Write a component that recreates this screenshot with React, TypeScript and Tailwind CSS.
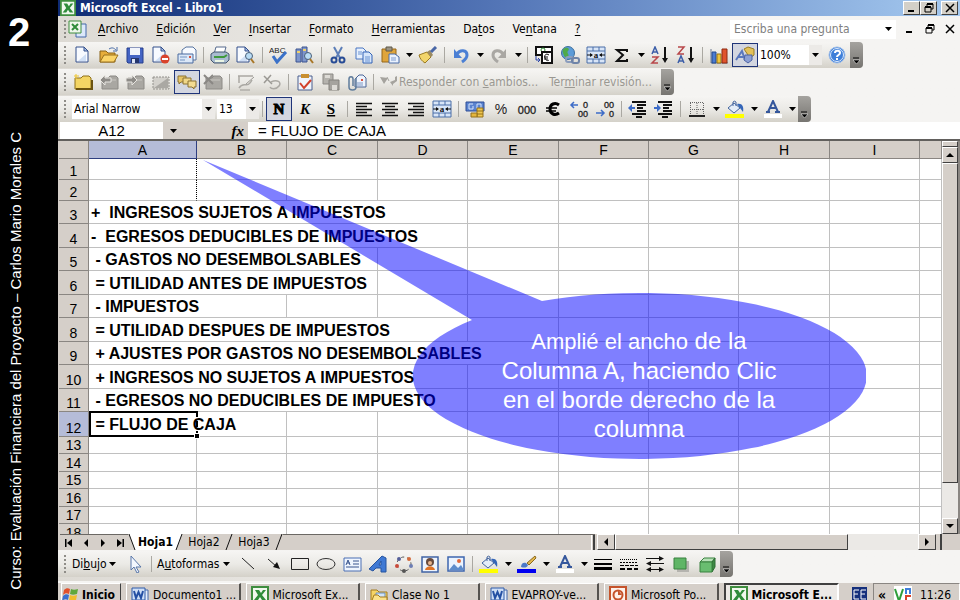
import type { ReactNode } from "react";

const Svg = ({ children, w = 20 }: { children: ReactNode; w?: number }) => (
  <svg width={w} height="18" viewBox={`0 0 ${w} 18`} fill="none" className="shrink-0" aria-hidden="true">
    {children}
  </svg>
);

const Caret = () => (
  <svg width="7" height="4" viewBox="0 0 7 4" aria-hidden="true" className="shrink-0">
    <path d="M0 0H7L3.5 4Z" fill="#000" />
  </svg>
);

const Sheet = ({ x = 3, y = 1 }: { x?: number; y?: number }) => (
  <>
    <path d={`M${x} ${y}h8l4 4v11h-12z`} fill="#f7faff" stroke="#34508c" />
    <path d={`M${x + 8} ${y}v4h4z`} fill="#a9c0e6" stroke="#34508c" />
    <path d={`M${x + 2} ${y + 14}h8V${y + 7}z`} fill="#cfdff5" />
  </>
);

const Lens = () => (
  <>
    <circle cx="13" cy="10" r="3.5" fill="#b9dcf5" stroke="#4a5f78" />
    <path d="M15 13l3 4" stroke="#a87728" strokeWidth="2" />
  </>
);

const Bucket = ({ color }: { color: string }) => (
  <>
    <path d="M3 8l6-5 6 5-6 5z" fill="#e4edf8" stroke="#44659e" />
    <path d="M8 6V2a2 2 0 0 1 3 0v4" stroke="#44659e" />
    <path d="M12 4c5-1 7 2 6 8l-3-4z" fill="#3566b8" />
    <path d="M0 14h19v4H0z" fill={color} />
  </>
);

const MergeCells = () => (
  <>
    <path d="M1 1h18v16H1z" fill="#d8e5f7" stroke="#4b6ea8" />
    <path d="M1 5h18M1 13h18M7 1v4M13 1v4M7 13v4M13 13v4" stroke="#4b6ea8" />
    <path d="M1 9h5M14 9h5" stroke="#111" />
    <path d="M7 9L4 7v4zM13 9l3-2v4z" fill="#111" />
    <text x="10" y="12" textAnchor="middle" fontSize="9" fontWeight="700" fill="#111" fontFamily="Liberation Serif, serif">
      a
    </text>
  </>
);

const Indent = ({ flip = false }: { flip?: boolean }) => (
  <>
    <path d="M4 2h14M9 5h9M9 8h6M9 11h9M4 14h14M8 17h6" stroke="#111" strokeWidth="2" />
    <path d={flip ? "M7 8L3 4v3H0v2h3v3z" : "M0 8l4-4v3h3v2H4v3z"} fill="#3d6cc8" />
  </>
);

const Zeros = ({ x, y, children }: { x: number; y: number; children: string }) => (
  <text x={x} y={y} textAnchor="end" fontSize="9" fill="#222" stroke="#222" strokeWidth=".3" fontFamily="Liberation Sans, sans-serif">
    {children}
  </text>
);

const GrayFolder = ({ children }: { children?: ReactNode }) => (
  <>
    <path d="M3 5h6l2-2h6l2 2v11H3z" fill="#a9a7a2" stroke="#8c8a86" />
    <path d="M4 7h13" stroke="#c9c7c2" />
    {children}
  </>
);

const ExcelLogo = () => (
  <>
    <path d="M1 1h16v16H1z" fill="#f1f8ee" stroke="#3f8d3f" strokeWidth="2" />
    <path d="M4 4h4l2 3 2-3h3l-4 5 4 5h-4l-2-3-2 3H3l4-5z" fill="#2f8c3a" />
  </>
);

const WordLogo = () => (
  <>
    <path d="M8 4h9v13H6z" fill="#e3ecfa" stroke="#4468aa" />
    <path d="M1 2h13v12H1z" fill="#cfdff6" stroke="#2f5ba8" />
    <path d="M3 5l2 7 2.500-6 2.500 6 2-7" stroke="#2450a4" strokeWidth="2" />
  </>
);

const icons: Record<string, ReactNode> = {
  new: <Sheet />,
  open: (
    <>
      <path d="M1 5h6l2 2h7v9H1z" fill="#e7ad3a" stroke="#8a6216" />
      <path d="M1 16l4-7h14l-4 7z" fill="#fbd468" stroke="#9a701c" />
      <path d="M10 3c3-2 5-1 7 1M18 1v4h-4" stroke="#4a6da8" />
    </>
  ),
  save: (
    <>
      <path d="M2 2h16v15H3l-1-1z" fill="#4464c4" stroke="#263f8c" />
      <path d="M5 2h10v7H5z" fill="#f1f4fb" />
      <path d="M6 12h8v5H6z" fill="#26376e" />
      <path d="M7 13h3v4H7z" fill="#dde4f5" />
    </>
  ),
  permission: (
    <>
      <Sheet x={2} />
      <circle cx="14" cy="13" r="4.500" fill="#d9432b" />
      <path d="M11 13h6" stroke="#fff" strokeWidth="2" />
    </>
  ),
  mail: (
    <>
      <path d="M5 8V4l4-3h7l3 3v10h-3" fill="#f7faff" stroke="#56739f" />
      <path d="M1 8h15v9H1z" fill="#dbe8f8" stroke="#4a6b9f" />
      <path d="M3 11h7M3 14h5" stroke="#7593c0" />
      <path d="M12 10h2v2h-2z" fill="#d65343" />
    </>
  ),
  print: (
    <>
      <path d="M6 1h10l-2 7H4z" fill="#fff" stroke="#566b8e" />
      <path d="M1 8l3-2h12l3 2v6l-3 3H4l-3-3z" fill="#a9bcd0" stroke="#43566e" />
      <path d="M4 11h10l3-2" stroke="#3f9a3c" strokeWidth="2" />
      <path d="M5 14h9v2H5z" fill="#eaf5e4" />
    </>
  ),
  preview: (
    <>
      <Sheet x={1} />
      <Lens />
    </>
  ),
  spell: (
    <>
      <text x="0" y="7" fontSize="8" fill="#222" fontFamily="Liberation Sans, sans-serif">
        ABC
      </text>
      <path d="M4 10l4 6 9-10" stroke="#3b72c9" strokeWidth="3" />
    </>
  ),
  research: (
    <>
      <path d="M1 3h5v13H1zM7 1h5v15H7z" fill="#7e96cb" stroke="#3d5590" />
      <path d="M2 6h3M8 4h3" stroke="#f1d26b" strokeWidth="2" />
      <Lens />
    </>
  ),
  cut: (
    <>
      <path d="M6 1l6 11M14 1L8 12" stroke="#5c7eb8" strokeWidth="2" />
      <circle cx="6" cy="14" r="2.500" stroke="#274b95" strokeWidth="2" />
      <circle cx="14" cy="14" r="2.500" stroke="#274b95" strokeWidth="2" />
    </>
  ),
  copy: (
    <>
      <path d="M2 2h7l3 3v8H2z" fill="#e7f0fd" stroke="#4a76c2" />
      <path d="M9 6h6l3 3v8H9z" fill="#d6e6fb" stroke="#3262b5" />
      <path d="M4 6h4M4 8h4M11 11h5M11 13h5M11 15h5" stroke="#6b93d2" />
    </>
  ),
  paste: (
    <>
      <path d="M2 3h14v13H2z" fill="#dfa53c" stroke="#94661a" />
      <path d="M6 1h6v4H6z" fill="#9b9484" stroke="#5e5948" />
      <path d="M9 8h6l4 3v6H9z" fill="#eaf2fd" stroke="#4a6da8" />
      <path d="M11 12h5M11 14h5" stroke="#7c9bd0" />
    </>
  ),
  brush: (
    <>
      <path d="M1 9l8-3 4 5-6 6c-3-2-5-4-6-8z" fill="#f2d56b" stroke="#9a7a22" />
      <path d="M9 6l4 5 2-2-3-5z" fill="#9b8a62" />
      <path d="M13 6l5-5" stroke="#4967a6" strokeWidth="3" />
    </>
  ),
  undo: (
    <>
      <path d="M6 8c3-5 10-4 10 1 0 3-2 5-5 7" stroke="#4c80d4" strokeWidth="3" />
      <path d="M3 3v9h8z" fill="#4c80d4" />
    </>
  ),
  redo: (
    <>
      <path d="M14 8C11 3 4 4 4 9c0 3 2 5 5 7" stroke="#a9a7a3" strokeWidth="3" />
      <path d="M17 3v9H9z" fill="#a9a7a3" />
    </>
  ),
  euroConvert: (
    <>
      <path d="M2 1h16v8H2z" fill="#fff" stroke="#111" strokeWidth="2" />
      <circle cx="9" cy="4" r="2" stroke="#2a8a2f" />
      <path d="M8 6h10v11H8z" fill="#fff" stroke="#111" strokeWidth="2" />
      <path d="M15 9c-3-2-5 0-4 3s3 3 4 2M10 11h4M10 13h4" stroke="#111" />
      <path d="M2 10v4h3M4 12l2 2-2 2" stroke="#2640a8" />
    </>
  ),
  link: (
    <>
      <circle cx="8" cy="7" r="6.500" fill="#5b9bd8" stroke="#3e6f9e" />
      <path d="M5 2c3-1 5 1 3 3s2 3 0 6-4-1-5-4 0-4 2-5z" fill="#4faa4a" />
      <rect x="6" y="11" width="7" height="5" rx="2" stroke="#8b9dbd" strokeWidth="2" />
      <rect x="12" y="12" width="7" height="5" rx="2" stroke="#6f84a8" strokeWidth="2" />
    </>
  ),
  merge: <MergeCells />,
  sum: <path d="M15 6V4H5l6 5-6 6h10v-2" stroke="#111" strokeWidth="2" />,
  sortAsc: (
    <>
      <path d="M2 8l3-7 3 7M3 6h4" stroke="#3c5ea8" strokeWidth="1.500" />
      <path d="M2 11h6l-6 6h6" stroke="#b8474a" strokeWidth="1.500" />
      <path d="M15 1v13" stroke="#111" strokeWidth="2" />
      <path d="M12 12h6l-3 5z" fill="#111" />
    </>
  ),
  sortDesc: (
    <>
      <path d="M2 1h6L2 8h6" stroke="#b8474a" strokeWidth="1.500" />
      <path d="M2 17l3-7 3 7M3 15h4" stroke="#3c5ea8" strokeWidth="1.500" />
      <path d="M15 1v13" stroke="#111" strokeWidth="2" />
      <path d="M12 12h6l-3 5z" fill="#111" />
    </>
  ),
  chart: (
    <>
      <path d="M2 3v14h17" stroke="#6b7892" />
      <path d="M3 6h4v11H3z" fill="#4b7bd0" stroke="#254a8e" />
      <path d="M8 8h4v9H8z" fill="#f0c63e" stroke="#977412" />
      <path d="M13 3h5v14h-5z" fill="#e0532c" stroke="#8e2a10" />
    </>
  ),
  drawing: (
    <>
      <path d="M9 3l4-2 6 2v6l-4 3z" fill="#e3c15a" stroke="#9c7e24" />
      <path d="M1 14l6-9 3 9M3 11h6" stroke="#5a78bd" strokeWidth="2" />
      <path d="M10 9h7v5l-4 3-4-3z" fill="#8b9fd4" stroke="#4c62a4" />
    </>
  ),
  help: (
    <>
      <circle cx="10" cy="9" r="8" fill="#3f7fd9" stroke="#9dbde9" />
      <circle cx="10" cy="9" r="6.500" stroke="#dceafc" />
      <path d="M8 7c0-3 5-3 5 0 0 2-3 2-3 4M10 12v2" stroke="#fff" strokeWidth="2" />
    </>
  ),
  folder: (
    <>
      <path d="M2 5h6l2-2h6l2 2v11H2z" fill="#f3d564" stroke="#8f7119" />
      <path d="M3 16h16V7" stroke="#6b5310" strokeWidth="2" />
      <path d="M3 1v5M1 3h5" stroke="#efc52f" />
    </>
  ),
  grayLeft: (
    <GrayFolder>
      <path d="M1 7l5-5v3h6v4H6v3z" fill="#8d8b87" stroke="#e8e6e1" />
    </GrayFolder>
  ),
  grayRight: (
    <GrayFolder>
      <path d="M12 7L7 2v3H1v4h6v3z" fill="#8d8b87" stroke="#e8e6e1" />
    </GrayFolder>
  ),
  grayNote: (
    <>
      <path d="M2 4h16v12H2z" fill="#d3d1cc" stroke="#92908b" strokeDasharray="2 1" />
      <path d="M3 15L17 5v10z" fill="#aaa8a3" />
    </>
  ),
  comments: (
    <>
      <path d="M1 3h8v6H4l-2 2V9H1z" fill="#e6c465" stroke="#8c7332" />
      <path d="M6 5h8v6H6z" fill="#f0d789" stroke="#8c7332" />
      <path d="M11 8h8v6h-2v2l-2-2h-4z" fill="#f3dc92" stroke="#8c7332" />
    </>
  ),
  grayDelete: (
    <GrayFolder>
      <path d="M1 2l9 9M10 2l-9 9" stroke="#8a8884" strokeWidth="2" />
    </GrayFolder>
  ),
  grayInk: (
    <>
      <path d="M2 3h15M3 3v7M3 15c5-8 8 2 13-8" stroke="#aaa8a3" strokeWidth="1.500" />
      <path d="M10 11l8-7M4 17h10" stroke="#9a9893" />
    </>
  ),
  grayErase: (
    <>
      <path d="M2 3l8 8M9 2l-7 8" stroke="#9b9994" strokeWidth="1.500" />
      <path d="M9 9c6-3 11 0 8 4s-8 3-9 1" stroke="#aaa8a3" strokeWidth="1.500" />
    </>
  ),
  task: (
    <>
      <path d="M3 3h14v14H3z" fill="#f0f4fb" stroke="#4a5f8e" />
      <path d="M6 1h8v4H6z" fill="#c98f2f" />
      <path d="M5 10l4 5 7-8" stroke="#d2402a" strokeWidth="2" />
    </>
  ),
  grayCopy: (
    <>
      <path d="M2 1h10v10H2z" fill="#b4b2ad" stroke="#8b8985" />
      <path d="M8 7h10v10H8z" fill="#a5a39e" stroke="#83817d" />
      <path d="M4 2h5v3H4zM11 12h5v5h-5z" fill="#dddbd6" />
    </>
  ),
  attach: (
    <>
      <path d="M8 6l4-4h4l3 3v9H8z" fill="#edf3fc" stroke="#4b6596" />
      <path d="M10 10h6M10 12h6" stroke="#7d97c5" />
      <path d="M9 5v9c0 4-7 4-7 0V6c0-3 4-3 4 0v7" stroke="#5f7c9c" strokeWidth="1.500" />
      <path d="M14 6h2v2h-2z" fill="#d65343" />
    </>
  ),
  bold: (
    <text x="10" y="14" textAnchor="middle" fontSize="15" fontWeight="700" fill="#000" stroke="#000" fontFamily="Liberation Serif, serif">
      N
    </text>
  ),
  italic: (
    <text x="10" y="14" textAnchor="middle" fontSize="15" fontWeight="700" fontStyle="italic" fill="#000" fontFamily="Liberation Serif, serif">
      K
    </text>
  ),
  underline: (
    <text x="10" y="14" textAnchor="middle" fontSize="15" fontWeight="700" textDecoration="underline" fill="#000" fontFamily="Liberation Serif, serif">
      S
    </text>
  ),
  alignLeft: <path d="M2 3.500h16M2 6.500h11M2 9.500h16M2 12.500h11M2 15.500h16" stroke="#111" strokeWidth="1.500" />,
  alignCenter: <path d="M2 3.500h16M5 6.500h10M2 9.500h16M5 12.500h10M2 15.500h16" stroke="#111" strokeWidth="1.500" />,
  alignRight: <path d="M2 3.500h16M7 6.500h11M2 9.500h16M7 12.500h11M2 15.500h16" stroke="#111" strokeWidth="1.500" />,
  currency: (
    <>
      <path d="M1 2h18v9H1z" fill="#5a83cf" stroke="#2f4f97" />
      <path d="M8 4H4v5h4M8 6v3M12 9V4h4v5" stroke="#d6e4fb" />
      <path d="M12 8h6v9h-6z" fill="#f0c850" stroke="#94701b" />
      <path d="M6 13h6v4H6z" fill="#e4b63d" stroke="#94701b" />
      <path d="M12 11h6M12 14h6" stroke="#94701b" />
    </>
  ),
  percent: (
    <text x="10" y="14" textAnchor="middle" fontSize="14" fill="#222" fontFamily="Liberation Sans, sans-serif">
      %
    </text>
  ),
  thousands: (
    <text x="10" y="14" textAnchor="middle" fontSize="11" fill="#222" stroke="#222" strokeWidth=".3" fontFamily="Liberation Sans, sans-serif">
      000
    </text>
  ),
  euro: (
    <>
      <path d="M16 5c-4-3-9-1-9 4s5 7 9 4" stroke="#000" strokeWidth="3" />
      <path d="M3 8h11M3 11h10" stroke="#000" strokeWidth="1.500" />
    </>
  ),
  moreDecimals: (
    <>
      <Zeros x={19} y={8}>
        0
      </Zeros>
      <Zeros x={19} y={17}>
        00
      </Zeros>
      <path d="M9 5H3M5 2L2 5l3 3" stroke="#3d6cc8" strokeWidth="1.500" />
    </>
  ),
  lessDecimals: (
    <>
      <Zeros x={19} y={8}>
        00
      </Zeros>
      <Zeros x={19} y={17}>
        0
      </Zeros>
      <path d="M1 13h7M6 10l3 3-3 3" stroke="#3d6cc8" strokeWidth="1.500" />
    </>
  ),
  outdent: <Indent />,
  indent: <Indent flip />,
  borders: (
    <>
      <path d="M3 2.500h14M3.500 3v13M10 3v13M16.500 3v13M3 9.500h14" stroke="#666" strokeDasharray="1 1" />
      <path d="M2 16h16" stroke="#222" strokeWidth="2" />
    </>
  ),
  fill: <Bucket color="#ffff00" />,
  fontColor: (
    <>
      <path d="M5 12l5-11 5 11M7 8h6M3 12h4M12 12h5" stroke="#35579c" strokeWidth="2" />
      <path d="M1 14h18v4H1z" fill="#fff" />
    </>
  ),
  pointer: <path d="M6 1v14l3-3 3 6 2-1-3-5h5z" fill="#f2f7fe" stroke="#5876a8" />,
  line: <path d="M4 3l12 11" stroke="#222" />,
  arrow: (
    <>
      <path d="M4 4l9 8" stroke="#222" />
      <path d="M16 14l-7-2 4-5z" fill="#111" />
    </>
  ),
  rect: <path d="M1.500 3.500h17v11h-17z" stroke="#222" />,
  oval: <ellipse cx="10" cy="9" rx="9" ry="5.500" stroke="#333" />,
  textbox: (
    <>
      <path d="M2 3h17v13H2z" fill="#eff5fe" stroke="#4a6fb3" />
      <path d="M4 10l2-5 2 5M5 8h3M11 6h6M11 9h6M4 12h13" stroke="#39558d" />
    </>
  ),
  wordart: <path d="M1 14L14 1l4 2v14h-5v-4H8l-3 3zM11 10h2V6z" fill="#3f79d4" stroke="#27549f" />,
  diagram: (
    <>
      <circle cx="10" cy="9" r="7" stroke="#555" strokeDasharray="3 3" />
      <circle cx="5" cy="4" r="2" fill="#555f9a" />
      <circle cx="15" cy="4" r="2" fill="#d36a3c" />
      <circle cx="17" cy="11" r="2" fill="#6d7fb5" />
      <circle cx="10" cy="16" r="2" fill="#555" />
      <circle cx="3" cy="11" r="2" fill="#c94b3b" />
    </>
  ),
  clipart: (
    <>
      <path d="M2 2h16v15H2z" fill="#eef4fd" stroke="#4063a4" strokeWidth="1.500" />
      <circle cx="10" cy="7" r="4" fill="#684a3c" />
      <circle cx="10" cy="8" r="2" fill="#e8b58e" />
      <path d="M5 15c1-5 9-5 10 0z" fill="#e07326" />
    </>
  ),
  picture: (
    <>
      <path d="M2 2h16v14H2z" fill="#eaf3fe" stroke="#3e66ae" strokeWidth="1.500" />
      <path d="M3 15l5-6 4 4 3-3 3 5z" fill="#5d8ccb" />
      <circle cx="13" cy="6" r="2" fill="#e0683a" />
    </>
  ),
  lineColor: (
    <>
      <path d="M4 12c0-4 3-5 5-4l2 2c-1 3-4 3-7 2z" fill="#4c79c8" />
      <path d="M10 8l8-7 1 2-7 7z" fill="#e4b84d" stroke="#8b6a1f" />
      <path d="M0 14h19v4H0z" fill="#0000f0" />
    </>
  ),
  lineStyle: (
    <>
      <path d="M1 4.500h18" stroke="#000" />
      <path d="M1 9h18" stroke="#000" strokeWidth="2" />
      <path d="M1 13.500h18" stroke="#000" strokeWidth="3" />
    </>
  ),
  dashStyle: (
    <>
      <path d="M1 4.500h18" stroke="#000" strokeDasharray="1 1" />
      <path d="M1 7.500h18" stroke="#000" strokeDasharray="2 1" />
      <path d="M1 10.500h18" stroke="#000" strokeDasharray="4 1" />
      <path d="M1 14h18" stroke="#000" strokeWidth="2" strokeDasharray="5 2" />
    </>
  ),
  arrowStyle: (
    <>
      <path d="M1 3.500h16M3 8.500h16M3 14.500h14" stroke="#111" />
      <path d="M14 1l5 2.500-5 2.500zM6 6L1 8.500 6 11zM6 12l-5 2.500L6 17zM14 12l5 2.500-5 2.500z" fill="#111" />
    </>
  ),
  shadow: (
    <>
      <path d="M6 6h12v11H6z" fill="#b5b4af" />
      <path d="M3 3h12v11H3z" fill="#5fb566" stroke="#39813f" />
    </>
  ),
  cube: (
    <>
      <path d="M3 7l4-4h11l-3 4z" fill="#b8e2b8" stroke="#39813f" />
      <path d="M15 7l3-4v9l-3 5z" fill="#3f8a46" stroke="#2e6d34" />
      <path d="M3 7h12v10H3z" fill="#69bd70" stroke="#39813f" />
    </>
  ),
};

const Tool = ({ icon, label, active = false }: { icon: string; label: string; active?: boolean }) => (
  <button
    type="button"
    aria-label={label}
    className={
      active
        ? "flex h-6 w-[26px] shrink-0 items-center justify-center border border-[#1f3478] bg-[#d3d6e0]"
        : "flex h-6 w-[26px] shrink-0 items-center justify-center"
    }
  >
    <Svg>{icons[icon]}</Svg>
  </button>
);

const Drop = ({ label }: { label: string }) => (
  <button type="button" aria-label={label} className="flex h-6 w-3 shrink-0 items-center justify-center">
    <Caret />
  </button>
);

const Sep = () => (
  <div className="flex w-[7px] shrink-0 justify-center">
    <div className="h-4 w-px bg-[#aaa8a2]" />
  </div>
);

const Toolbar = ({ label, children }: { label: string; children: ReactNode }) => (
  <div
    role="toolbar"
    aria-label={label}
    className="flex h-[26px] w-max items-center rounded-r bg-linear-to-b from-[#f6f5f3] via-[#ebeae6] to-[#d4d1c9] pl-1"
  >
    <div className="mr-1 ml-0.5 h-[18px] w-[2px] shrink-0 border-l-2 border-dotted border-[#8f8d88]" />
    {children}
    <button
      type="button"
      aria-label={`Opciones de ${label}`}
      className="flex h-full w-[13px] shrink-0 items-end justify-center rounded-r bg-linear-to-b from-[#a5a39f] to-[#777571] pb-1"
    >
      <svg width="7" height="7" viewBox="0 0 7 7" aria-hidden="true">
        <path d="M0 1h6" stroke="#000" />
        <path d="M0 3h7L3.500 7z" fill="#000" stroke="#fff" strokeWidth=".5" />
      </svg>
    </button>
  </div>
);

const Combo = ({ id, label, value, className }: { id: string; label: string; value: string; className: string }) => (
  <div className={`relative h-5 shrink-0 bg-white ${className}`}>
    <label htmlFor={id} className="sr-only">
      {label}
    </label>
    <select id={id} className="block h-5 w-full appearance-none bg-transparent py-0 pl-0.5 leading-5 outline-none">
      <option>{value}</option>
    </select>
    <span className="pointer-events-none absolute inset-y-0 right-0 flex w-[13px] items-center justify-center bg-[#eceae7]">
      <Caret />
    </span>
  </div>
);

const WindowGlyph = ({ kind }: { kind: "min" | "restore" | "close" }) => (
  <svg width="10" height="10" viewBox="0 0 10 10" fill="none" stroke="#000" aria-hidden="true">
    {kind === "min" && <path d="M1 8h6" strokeWidth="2" />}
    {kind === "restore" && (
      <>
        <path d="M3 4V1h6v5H7" />
        <path d="M3 1h6" strokeWidth="2" />
        <path d="M1 4h6v5H1z" />
        <path d="M1 4h6" strokeWidth="2" />
      </>
    )}
    {kind === "close" && <path d="M1 1l8 8M9 1L1 9" strokeWidth="1.500" />}
  </svg>
);

const windowControls = [
  { kind: "min", label: "Minimizar" },
  { kind: "restore", label: "Restaurar" },
  { kind: "close", label: "Cerrar" },
] as const;

const TitleBar = () => (
  <header className="flex h-4 shrink-0 items-center bg-linear-to-r from-[#0f2b74] via-[#5577b8] to-[#a6caf0] pl-0.5 text-white">
    <svg width="16" height="16" viewBox="0 0 18 18" fill="none" aria-hidden="true">
      <ExcelLogo />
    </svg>
    <h1 className="ml-1 text-[12px] leading-4 font-bold whitespace-nowrap">Microsoft Excel - Libro1</h1>
    <div className="ml-auto flex pr-0.5">
      {windowControls.map((c) => (
        <button
          key={c.kind}
          type="button"
          aria-label={c.label}
          className="flex h-[14px] w-[17px] items-center justify-center border border-t-white border-r-[#404040] border-b-[#404040] border-l-white bg-[#d4d0c8] last:ml-1"
        >
          <WindowGlyph kind={c.kind} />
        </button>
      ))}
    </div>
  </header>
);

const menus: [string, string, string][] = [
  ["", "A", "rchivo"],
  ["", "E", "dición"],
  ["", "V", "er"],
  ["", "I", "nsertar"],
  ["", "F", "ormato"],
  ["", "H", "erramientas"],
  ["Da", "t", "os"],
  ["Ve", "n", "tana"],
  ["", "?", ""],
];

const MenuBar = () => (
  <nav className="flex h-[26px] shrink-0 items-center pl-1" aria-label="Menú">
    <div className="mr-0.5 ml-0.5 h-[18px] w-[2px] border-l-2 border-dotted border-[#8f8d88]" />
    <Svg>
      <path d="M8 4h10v13H8z" fill="#dce8fa" stroke="#4468aa" />
      <path d="M1 1h12v12H1z" fill="#eff7ec" stroke="#3f8d3f" />
      <path d="M4 4l6 6M10 4l-6 6" stroke="#2f8c3a" strokeWidth="2" />
    </Svg>
    <div className="ml-2.5 flex gap-[18px]">
      {menus.map(([before, key, after]) => (
        <button key={key} type="button" className="leading-4 whitespace-nowrap">
          {before}
          <span className="underline underline-offset-2">{key}</span>
          {after}
        </button>
      ))}
    </div>
    <div className="relative mr-2 ml-auto w-[166px]">
      <input
        aria-label="Escriba una pregunta"
        placeholder="Escriba una pregunta"
        className="block h-[19px] w-full bg-white pr-4 pl-1 leading-4 outline-none placeholder:text-[#808080]"
      />
      <span className="pointer-events-none absolute inset-y-0 right-1 flex items-center">
        <Caret />
      </span>
    </div>
    <div className="flex gap-2 pr-1">
      {windowControls.map((c) => (
        <button key={c.kind} type="button" aria-label={`${c.label} libro`} className="flex w-3 justify-center">
          <WindowGlyph kind={c.kind} />
        </button>
      ))}
    </div>
  </nav>
);

const StandardBar = () => (
  <Toolbar label="Estándar">
    <Tool icon="new" label="Nuevo" />
    <Tool icon="open" label="Abrir" />
    <Tool icon="save" label="Guardar" />
    <Tool icon="permission" label="Permiso" />
    <Tool icon="mail" label="Correo electrónico" />
    <Sep />
    <Tool icon="print" label="Imprimir" />
    <Tool icon="preview" label="Vista preliminar" />
    <Sep />
    <Tool icon="spell" label="Ortografía" />
    <Tool icon="research" label="Referencia" />
    <Sep />
    <Tool icon="cut" label="Cortar" />
    <Tool icon="copy" label="Copiar" />
    <Tool icon="paste" label="Pegar" />
    <Drop label="Opciones de pegado" />
    <Tool icon="brush" label="Copiar formato" />
    <Sep />
    <Tool icon="undo" label="Deshacer" />
    <Drop label="Lista deshacer" />
    <Tool icon="redo" label="Rehacer" />
    <Drop label="Lista rehacer" />
    <Sep />
    <Tool icon="euroConvert" label="Conversión a euros" />
    <Tool icon="link" label="Hipervínculo" />
    <Tool icon="merge" label="Combinar y centrar" />
    <Tool icon="sum" label="Autosuma" />
    <Drop label="Más funciones" />
    <Tool icon="sortAsc" label="Orden ascendente" />
    <Tool icon="sortDesc" label="Orden descendente" />
    <Sep />
    <Tool icon="chart" label="Asistente para gráficos" />
    <Tool icon="drawing" label="Dibujo" active />
    <Combo id="zoom" label="Zoom" value="100%" className="mr-0.5 w-16" />
    <Tool icon="help" label="Ayuda" />
  </Toolbar>
);

const ReviewBar = () => (
  <Toolbar label="Revisión">
    <Tool icon="folder" label="Nuevo comentario" />
    <Tool icon="grayLeft" label="Comentario anterior" />
    <Tool icon="grayRight" label="Comentario siguiente" />
    <Tool icon="grayNote" label="Mostrar comentario" />
    <Tool icon="comments" label="Mostrar todos los comentarios" active />
    <Tool icon="grayDelete" label="Eliminar comentario" />
    <Sep />
    <Tool icon="grayInk" label="Anotaciones" />
    <Tool icon="grayErase" label="Eliminar anotaciones" />
    <Sep />
    <Tool icon="task" label="Crear tarea" />
    <Tool icon="grayCopy" label="Actualizar archivo" />
    <Tool icon="attach" label="Enviar como adjunto" />
    <Sep />
    <button type="button" className="flex items-center pl-0.5 text-[#9a9892]">
      <Svg>
        <path d="M1 4l8 1-4 6zM11 9l5-2V4l2-1v5l-4 3v2z" fill="#a5a39e" />
        <path d="M8 4l2 4" stroke="#a5a39e" />
      </Svg>
      <span className="w-[150px] text-left whitespace-nowrap">
        Responder con <u>c</u>ambios...
      </span>
    </button>
    <button type="button" className="w-28 text-left whitespace-nowrap text-[#9a9892]">
      Ter<u>m</u>inar revisión...
    </button>
  </Toolbar>
);

const FormatBar = () => (
  <Toolbar label="Formato">
    <Combo id="font" label="Fuente" value="Arial Narrow" className="mr-0.5 ml-0.5 w-[143px]" />
    <Combo id="size" label="Tamaño de fuente" value="13" className="w-[42px]" />
    <Sep />
    <Tool icon="bold" label="Negrita" active />
    <Tool icon="italic" label="Cursiva" />
    <Tool icon="underline" label="Subrayado" />
    <Sep />
    <Tool icon="alignLeft" label="Alinear a la izquierda" />
    <Tool icon="alignCenter" label="Centrar" />
    <Tool icon="alignRight" label="Alinear a la derecha" />
    <Tool icon="merge" label="Combinar celdas" />
    <Sep />
    <Tool icon="currency" label="Moneda" />
    <Tool icon="percent" label="Porcentaje" />
    <Tool icon="thousands" label="Millares" />
    <Tool icon="euro" label="Euro" />
    <Tool icon="moreDecimals" label="Aumentar decimales" />
    <Tool icon="lessDecimals" label="Disminuir decimales" />
    <Sep />
    <Tool icon="outdent" label="Disminuir sangría" />
    <Tool icon="indent" label="Aumentar sangría" />
    <Sep />
    <Tool icon="borders" label="Bordes" />
    <Drop label="Tipos de borde" />
    <Tool icon="fill" label="Color de relleno" />
    <Drop label="Más rellenos" />
    <Tool icon="fontColor" label="Color de fuente" />
    <Drop label="Más colores de fuente" />
  </Toolbar>
);

const DrawBar = () => (
  <Toolbar label="Dibujo">
    <button type="button" className="flex w-[52px] shrink-0 items-center gap-0.5 pl-0.5">
      <span>
        Di<u>b</u>ujo
      </span>
      <Caret />
    </button>
    <Tool icon="pointer" label="Seleccionar objetos" />
    <Sep />
    <button type="button" className="flex w-20 shrink-0 items-center gap-1 pl-0.5">
      <span>
        A<u>u</u>toformas
      </span>
      <Caret />
    </button>
    <Tool icon="line" label="Línea" />
    <Tool icon="arrow" label="Flecha" />
    <Tool icon="rect" label="Rectángulo" />
    <Tool icon="oval" label="Elipse" />
    <Tool icon="textbox" label="Cuadro de texto" />
    <Tool icon="wordart" label="WordArt" />
    <Tool icon="diagram" label="Diagrama" />
    <Tool icon="clipart" label="Imagen prediseñada" />
    <Tool icon="picture" label="Imagen" />
    <Sep />
    <Tool icon="fill" label="Relleno de forma" />
    <Drop label="Rellenos de forma" />
    <Tool icon="lineColor" label="Color de línea" />
    <Drop label="Colores de línea" />
    <Tool icon="fontColor" label="Color de texto" />
    <Drop label="Colores de texto" />
    <Tool icon="lineStyle" label="Estilo de línea" />
    <Tool icon="dashStyle" label="Estilo de guión" />
    <Tool icon="arrowStyle" label="Estilo de flecha" />
    <Tool icon="shadow" label="Sombra" />
    <Tool icon="cube" label="3D" />
  </Toolbar>
);

const FormulaBar = () => (
  <div className="flex h-[17px] shrink-0 bg-[#d5cfc9] pl-0.5 font-['Liberation_Sans',Arial,sans-serif]">
    <input aria-label="Cuadro de nombres" defaultValue="A12" className="w-[103px] bg-white text-center text-[15px] leading-4 outline-none" />
    <button type="button" aria-label="Lista de nombres" className="flex w-5 items-center justify-center">
      <Caret />
    </button>
    <button
      type="button"
      aria-label="Insertar función"
      className="ml-auto w-[62px] pr-1 text-right font-['Liberation_Serif',serif] text-[15px] leading-4 font-bold italic"
    >
      fx
    </button>
    <input
      aria-label="Barra de fórmulas"
      defaultValue="= FLUJO DE CAJA"
      className="w-[calc(100%-188px)] bg-white pl-2.5 text-[15px] leading-4 outline-none"
    />
  </div>
);

const columns = [
  { name: "A", width: "w-[108px]" },
  { name: "B", width: "w-[90px]" },
  { name: "C", width: "w-[91px]" },
  { name: "D", width: "w-[90px]" },
  { name: "E", width: "w-[91px]" },
  { name: "F", width: "w-[90px]" },
  { name: "G", width: "w-[90px]" },
  { name: "H", width: "w-[91px]" },
  { name: "I", width: "w-[90px]" },
  { name: "", width: "w-auto" },
];

const entries: Record<number, { text: string; span: number }> = {
  3: { text: "+  INGRESOS SUJETOS A IMPUESTOS", span: 4 },
  4: { text: "-  EGRESOS DEDUCIBLES DE IMPUESTOS", span: 4 },
  5: { text: " - GASTOS NO DESEMBOLSABLES", span: 3 },
  6: { text: " = UTILIDAD ANTES DE IMPUESTOS", span: 3 },
  7: { text: " - IMPUESTOS", span: 2 },
  8: { text: " = UTILIDAD DESPUES DE IMPUESTOS", span: 4 },
  9: { text: " + AJUSTES POR GASTOS NO DESEMBOLSABLES", span: 5 },
  10: { text: " + INGRESOS NO SUJETOS A IMPUESTOS", span: 4 },
  11: { text: " - EGRESOS NO DEDUCIBLES DE IMPUESTO", span: 4 },
  12: { text: " = FLUJO DE CAJA", span: 2 },
};

const rowHeight = (n: number) => {
  if (n < 3) return "h-[21px]";
  if (n < 12) return n % 2 ? "h-[23px]" : "h-6";
  if (n === 12) return "h-[25px]";
  return n % 2 ? "h-[17px]" : "h-[18px]";
};

const rows = Array.from({ length: 30 }, (_, i) => i + 1);

const Grid = () => (
  <table className="w-full table-fixed border-separate border-spacing-0 bg-white font-['Liberation_Sans',Arial,sans-serif]">
    <colgroup>
      <col className="w-[30px]" />
      {columns.map((c) => (
        <col key={c.name} className={c.width} />
      ))}
    </colgroup>
    <thead>
      <tr className="h-[18px] bg-[#d5cfc9] text-[14px] leading-4">
        <th className="border-r border-b border-[#8a8682] p-0" aria-label="Seleccionar todo" />
        {columns.map((c) => (
          <th
            key={c.name}
            className={
              c.name === "A"
                ? "border-r border-b border-[#2f3f80] bg-[#b5bcd8] p-0 font-normal"
                : "border-r border-b border-[#8a8682] p-0 font-normal"
            }
          >
            {c.name}
          </th>
        ))}
      </tr>
    </thead>
    <tbody>
      {rows.map((n) => {
        const entry = entries[n];
        const span = entry ? entry.span : 0;
        return (
          <tr key={n} className={rowHeight(n)}>
            <th
              scope="row"
              className={
                n === 12
                  ? "border-r border-b border-[#8a8682] bg-[#b5bcd8] p-0 align-bottom text-[14px] leading-4 font-normal"
                  : "border-r border-b border-[#8a8682] bg-[#d5cfc9] p-0 align-bottom text-[14px] leading-4 font-normal"
              }
            >
              {n}
            </th>
            {entry && (
              <td
                colSpan={span}
                className="relative border-r border-b border-[#c0c0c0] p-0 pt-0.5 pl-0.5 text-[16px] leading-5 font-bold whitespace-pre"
              >
                {entry.text}
                {n === 12 && (
                  <span className="absolute -top-px left-0 h-[26px] w-[109px] border-2 border-black [border-right-style:dashed]">
                    <span className="absolute -right-1 -bottom-1 size-1.5 border border-white bg-black" />
                  </span>
                )}
              </td>
            )}
            {columns.slice(span).map((c) => (
              <td
                key={c.name}
                className={
                  c.name === "A" && n < 3
                    ? "border-r border-b border-[#c0c0c0] p-0 [border-right-color:#000] [border-right-style:dotted]"
                    : "border-r border-b border-[#c0c0c0] p-0"
                }
              />
            ))}
          </tr>
        );
      })}
    </tbody>
  </table>
);

const raised = "border border-t-white border-r-[#404040] border-b-[#404040] border-l-white bg-[#d5cfc9]";

const ScrollArrow = ({ d, label, size }: { d: string; label: string; size: string }) => (
  <button type="button" aria-label={label} className={`flex shrink-0 items-center justify-center ${raised} ${size}`}>
    <svg width="8" height="8" viewBox="0 0 8 8" aria-hidden="true">
      <path d={d} />
    </svg>
  </button>
);

const VerticalScroll = () => (
  <div className="flex w-[18px] shrink-0 flex-col border-r-2 border-[#8a8682] bg-[#ebe9e6]">
    <div className={`h-1.5 shrink-0 ${raised}`} />
    <ScrollArrow d="M0 6h8L4 2z" label="Subir" size="h-4 w-full" />
    <div className={`grow-[9] ${raised}`} />
    <div className="grow" />
    <ScrollArrow d="M0 2h8L4 6z" label="Bajar" size="h-4 w-full" />
  </div>
);

// Slanted divider between two sheet tabs
const Slant = ({ d, bg }: { d: string; bg?: string }) => (
  <svg width="8" height="16" viewBox="0 0 8 16" fill="none" aria-hidden="true" className="shrink-0">
    {bg && <path d={bg} fill="#fff" />}
    <path d={d} stroke="#111" />
  </svg>
);

const SheetTabs = () => (
  <div className="flex h-4 shrink-0 bg-[#d5cfc9] pl-0.5">
    <div className="flex w-[68px] shrink-0 items-center justify-around border-t border-[#6b6864]">
      {[
        ["Primera hoja", "M0 0h1.500v8H0zM7 0v8L2 4z"],
        ["Hoja anterior", "M6 0v8L2 4z"],
        ["Hoja siguiente", "M2 0v8l4-4z"],
        ["Última hoja", "M6.500 0H8v8H6.500zM1 0v8l5-4z"],
      ].map(([label, d]) => (
        <button key={label} type="button" aria-label={label}>
          <svg width="8" height="8" viewBox="0 0 8 8" aria-hidden="true">
            <path d={d} />
          </svg>
        </button>
      ))}
    </div>
    <div className="flex items-center leading-4">
      <Slant d="M1 0l6 16" bg="M1 0l6 16h1V0z" />
      <button type="button" className="h-4 bg-white px-0.5 font-bold">
        Hoja1
      </button>
      <Slant d="M7 0L1 16" bg="M0 0h7L1 16H0z" />
      <button type="button" className="h-4 w-[42px]">
        Hoja2
      </button>
      <Slant d="M7 0L1 16" />
      <button type="button" className="h-4 w-[42px]">
        Hoja3
      </button>
      <Slant d="M7 0L1 16" />
    </div>
    <div className="flex min-w-0 grow-[31] basis-0 justify-end border-t border-[#6b6864]">
      <div className="w-1 border-r-2 border-l border-l-white border-r-[#404040]" />
    </div>
    <ScrollArrow d="M6 0v8L2 4z" label="Izquierda" size="ml-0.5 w-[18px]" />
    <div className={`min-w-0 grow-[23] basis-0 ${raised}`} />
    <div className="min-w-0 grow-[7] basis-0 bg-[#ebe9e6]" />
    <ScrollArrow d="M2 0v8l4-4z" label="Derecha" size="w-[18px]" />
    <div className="mr-[18px] w-1.5 shrink-0 border-r-2 border-[#404040]" />
  </div>
);

const Callout = () => (
  <aside className="pointer-events-none absolute top-[21px] left-[145px] h-[299px] w-[663px]">
    <svg width="663" height="299" viewBox="0 0 663 299" aria-hidden="true">
      <path d="M0 0L339 141A227 83 0 1 1 269 160Z" fill="#0000ff" fillOpacity=".5" />
    </svg>
    <p className="absolute right-0 bottom-0 flex h-[166px] w-[454px] flex-col items-center justify-center pt-4 font-['Liberation_Sans',Arial,sans-serif] text-[24px] leading-[29px] whitespace-nowrap text-white">
      <span>
        <span className="text-[22px]">Amplié el ancho</span> de la
      </span>
      <span>Columna A, haciendo Clic</span>
      <span>en el borde derecho de la</span>
      <span>columna</span>
    </p>
  </aside>
);

const tasks: { name: string; icon: ReactNode }[] = [
  { name: "Documento1 ...", icon: <WordLogo /> },
  { name: "Microsoft Ex...", icon: <ExcelLogo /> },
  {
    name: "Clase No 1",
    icon: (
      <>
        <path d="M1 4h6l2 2h8v11H1z" fill="#f5d466" stroke="#a37b1e" />
        <path d="M6 7h9v7H6z" fill="#cfe3f8" stroke="#6d8fbd" />
        <path d="M1 17l3-8h4l2 2h7v6z" fill="#fbe28a" stroke="#a37b1e" />
      </>
    ),
  },
  { name: "EVAPROY-ve...", icon: <WordLogo /> },
  {
    name: "Microsoft Po...",
    icon: (
      <>
        <path d="M1 1h16v16H1z" fill="#fdf1ea" stroke="#c5532b" strokeWidth="2" />
        <circle cx="9" cy="9" r="4.500" stroke="#c5532b" strokeWidth="2" />
        <path d="M9 9V4l4 5z" fill="#c5532b" />
      </>
    ),
  },
  { name: "Microsoft E...", icon: <ExcelLogo /> },
];

const Taskbar = () => (
  <footer className="flex h-[19px] shrink-0 items-start gap-[5px] overflow-hidden border-t-2 border-[#f5f4f2] bg-[#d5cfc9] pl-[3px] leading-4">
    <button type="button" className={`flex h-6 w-[60px] shrink-0 items-center gap-0.5 font-bold ${raised}`}>
      <Svg w={18}>
        <path d="M2 4c2-2 4-2 6-1L7 8C5 7 3 7 1 9z" fill="#e2502c" />
        <path d="M9 3c2 1 4 1 7 0l-1 5c-3 1-5 1-7 0z" fill="#5fa83c" />
        <path d="M1 10c2-2 4-2 6-1l-1 5c-2-1-4-1-6 1z" fill="#3a6fd0" />
        <path d="M8 9c2 1 4 1 7 0l-1 5c-3 1-5 1-7 0z" fill="#f0bd2c" />
      </Svg>
      Inicio
    </button>
    {tasks.map((t, i) => (
      <button
        key={t.name}
        type="button"
        className={
          i === tasks.length - 1
            ? "flex h-6 min-w-0 flex-1 items-center gap-1 border-2 border-t-[#404040] border-r-white border-b-white border-l-[#404040] bg-[#ece9e6] pl-1 font-bold whitespace-nowrap"
            : "flex h-6 min-w-0 flex-1 items-center gap-1 border border-t-white border-r-2 border-r-[#55524f] border-b-[#404040] border-l-white bg-[#d5cfc9] pl-1 whitespace-nowrap"
        }
      >
        <Svg w={18}>{t.icon}</Svg>
        {t.name}
      </button>
    ))}
    <div className="ml-2 h-6 w-4 shrink-0 pt-1">
      <svg width="15" height="15" viewBox="0 0 15 15" fill="none" aria-hidden="true">
        <path d="M0 0h15v15H0z" fill="#16307c" />
        <path d="M7 3H2v9h5M2 7h4M14 3H9v9h5M9 7h4" stroke="#fff" strokeWidth="1" />
      </svg>
    </div>
    <div className="flex h-6 w-[87px] shrink-0 items-center justify-between border border-t-[#8a8682] border-r-white border-b-white border-l-[#8a8682] pr-2 pl-1">
      <span className="text-[14px] font-bold">«</span>
      <Svg w={18}>
        <path d="M0 0h18v18H0z" fill="#fff" />
        <path d="M1 3l4 12 4-12" stroke="#2f9e3a" strokeWidth="2" />
        <path d="M12 8V3h4v5" stroke="#3f7fd9" strokeWidth="2" />
        <path d="M17 10h-5v6h5" stroke="#d9432b" strokeWidth="2" />
      </Svg>
      <time>11:26</time>
    </div>
  </footer>
);

export default function App() {
  return (
    <div className="flex h-screen overflow-hidden bg-black font-['DejaVu_Sans_Condensed','DejaVu_Sans',Tahoma,sans-serif] text-[12px] text-black">
      <aside className="flex w-[58px] shrink-0 flex-col justify-between bg-black pb-2.5 font-['Liberation_Sans',Arial,sans-serif] text-white">
        <span className="pt-2.5 pl-2 text-[40px] leading-[44px] font-bold">2</span>
        <p className="ml-1.5 rotate-180 self-start text-[15px] leading-5 whitespace-nowrap [writing-mode:vertical-rl]">
          Curso: Evaluación Financiera del Proyecto – Carlos Mario Morales C
        </p>
      </aside>

      <div className="flex min-w-0 flex-1 flex-col bg-[#d5cfc9]">
        <TitleBar />
        <div className="shrink-0 bg-linear-to-r from-[#dddad4] to-[#f5f4f2] to-60%">
          <MenuBar />
          <div className="flex flex-col gap-px">
            <StandardBar />
            <ReviewBar />
            <FormatBar />
          </div>
        </div>
        <FormulaBar />
        <main className="relative flex min-h-0 flex-1 flex-col">
          <div className="flex min-h-0 flex-1 border-t-2 border-[#62605d] pl-px">
            <div className="min-w-0 flex-1 overflow-hidden">
              <Grid />
            </div>
            <VerticalScroll />
          </div>
          <Callout />
        </main>
        <SheetTabs />
        <div className="shrink-0 border-t border-[#f5f4f2] bg-linear-to-r from-[#dddad4] to-[#f5f4f2] to-60% pb-1">
          <DrawBar />
        </div>
        <Taskbar />
      </div>
    </div>
  );
}
